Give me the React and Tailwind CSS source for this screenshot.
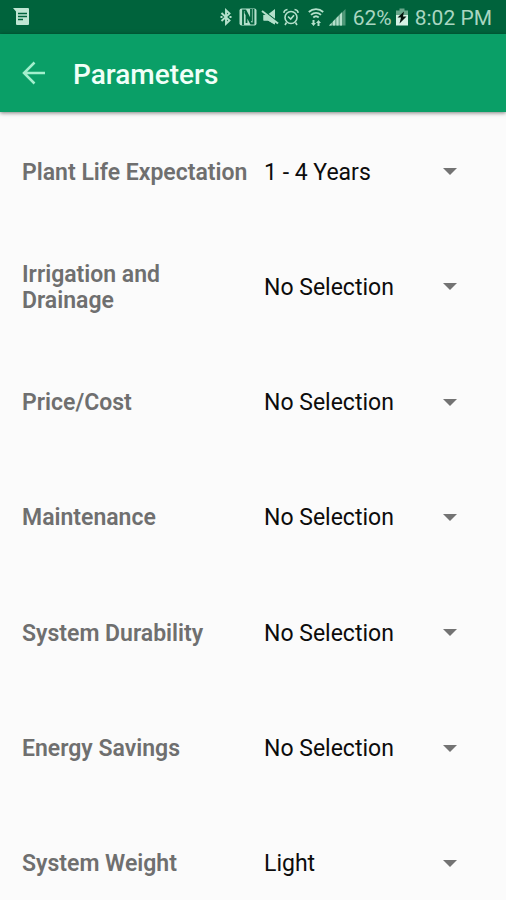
import { useState } from "react";

const NONE = "No Selection";

const PARAMETERS = [
  { id: "life", label: "Plant Life Expectation", value: "1 - 4 Years", options: [NONE, "1 - 4 Years"] },
  { id: "irrigation", label: "Irrigation and Drainage", value: NONE, options: [NONE] },
  { id: "price", label: "Price/Cost", value: NONE, options: [NONE] },
  { id: "maintenance", label: "Maintenance", value: NONE, options: [NONE] },
  { id: "durability", label: "System Durability", value: NONE, options: [NONE] },
  { id: "energy", label: "Energy Savings", value: NONE, options: [NONE] },
  { id: "weight", label: "System Weight", value: "Light", options: [NONE, "Light"] },
];

function NoteIcon() {
  return (
    <svg className="h-[18px] w-[18px]" viewBox="0 0 18 18" aria-hidden="true">
      <path fill="#bfe6d3" d="M0 0h15a1 1 0 0 1 1 1v15a1 1 0 0 1-1 1H4a1 1 0 0 1-1-1V3.500z" />
      <path stroke="#00633c" strokeWidth="1.300" d="M5 5.500h9M5 8.500h9M5 11.500h5" />
    </svg>
  );
}

function BluetoothIcon() {
  return (
    <svg className="h-[18px] w-3" viewBox="0 0 12 18" fill="none" stroke="#b4e0cb" strokeWidth="1.900" aria-hidden="true">
      <path d="M1.500 5l8 7.500L6 15.800V2.200l3.500 3.300L1.500 13" />
      <path d="M0.500 9h2M9.500 9h2" />
    </svg>
  );
}

function NfcIcon() {
  return (
    <svg className="h-[18px] w-[18px]" viewBox="0 0 18 18" aria-hidden="true">
      <rect x="0.500" y="0.500" width="17" height="17" rx="2" fill="#b4e0cb" />
      <path fill="none" stroke="#00633c" strokeWidth="1.800" d="M4 17V2.500h2.500L12 13V1" />
      <path fill="none" stroke="#00633c" strokeWidth="1.800" d="M7.500 7v8M14.500 1v14.500H12L6 4" />
    </svg>
  );
}

function MuteIcon() {
  return (
    <svg className="h-[18px] w-[18px]" viewBox="0 0 18 18" aria-hidden="true">
      <path fill="#b4e0cb" d="M14 1v10L7.500 6zM2.500 6.500L13.500 16v.5L7 12.500H2.500z" />
      <path stroke="#00633c" strokeWidth="3.600" d="M0 2.500l17.500 13.500" />
      <path stroke="#b4e0cb" strokeWidth="2" d="M1 3l16 12.500" />
      <path fill="#b4e0cb" d="M2.500 7h3L14 13.500v3L7 12.500H2.500z" />
    </svg>
  );
}

function AlarmIcon() {
  return (
    <svg className="h-[18px] w-4" viewBox="0 0 16 18" fill="none" stroke="#b4e0cb" strokeWidth="1.600" aria-hidden="true">
      <circle cx="8" cy="9.500" r="6" />
      <path d="M5 8.500l2.700 2.500L11 7.200" />
      <path d="M0.800 4.800C1 2.800 2.200 1.700 4.500 1.500M15.200 4.800C15 2.800 13.800 1.700 11.500 1.500M3.500 14.500L2 17M12.500 14.500L14 17" />
    </svg>
  );
}

function WifiIcon() {
  return (
    <svg className="h-[18px] w-4" viewBox="0 0 16 18" fill="none" stroke="#b4e0cb" strokeWidth="1.800" aria-hidden="true">
      <path d="M0.800 4a10.500 10.500 0 0 1 14.400 0M3 6.800a7.300 7.300 0 0 1 10 0M5.300 9.500a4 4 0 0 1 5.400 0" />
      <path fill="#b4e0cb" stroke="none" d="M4.500 12h2v3H8l-2.500 3L3 15h1.500zM9.500 18v-3H8l2.500-3 2.500 3h-1.500v3z" />
    </svg>
  );
}

function SignalIcon() {
  return (
    <svg className="h-[18px] w-[17px]" viewBox="0 0 17 18" aria-hidden="true">
      <path fill="#6fae92" d="M0 17.500L13 4v13.500z" />
      <path fill="#b4e0cb" d="M0 17.500L2.500 15v2.500zM4 17.500v-4L6 11.500v6zM7.500 17.500V10L9.500 8v9.500zM11 17.500v-11L13 4.500v13z" />
      <path fill="#4f9878" d="M13 17.500v-13L16.500 1v16.500z" />
    </svg>
  );
}

function BatteryIcon() {
  return (
    <svg className="h-[18px] w-3" viewBox="0 0 12 18" aria-hidden="true">
      <path fill="#6aa88c" d="M3.500 0.500h5V2.500H12V7H0V2.500h3.500z" />
      <path fill="#d6f2e4" d="M0 7h12v10.500H0z" />
      <path fill="#04130c" d="M8 3.500L1.500 9.500h3.500L3.500 15.500l7-7H7z" />
    </svg>
  );
}

function StatusBar() {
  return (
    <div className="flex h-[34px] shrink-0 items-center justify-between bg-[#00633c] pl-[13px] pr-[14px] text-[#a9d6c0]">
      <NoteIcon />
      <div className="flex items-center">
        <div className="flex items-center gap-[7px]">
          <BluetoothIcon />
          <NfcIcon />
        </div>
        <div className="ml-1 flex items-center gap-1">
          <MuteIcon />
          <AlarmIcon />
        </div>
        <div className="ml-[9px] mr-[7px] flex items-center gap-[5px]">
          <WifiIcon />
          <SignalIcon />
        </div>
        <span className="pt-[2px] text-[21px] leading-6">62%</span>
        <div className="ml-1 mr-[7px]">
          <BatteryIcon />
        </div>
        <span className="pt-[2px] text-[21px] leading-6">8:02 PM</span>
      </div>
    </div>
  );
}

function AppBar() {
  return (
    <header className="z-10 flex h-[78px] shrink-0 items-center bg-[#0a9f67] px-[22px] shadow-[0_1px_4px_rgba(0,0,0,0.5)]">
      <button type="button" aria-label="Back" className="mr-[27px] h-6 w-6">
        <svg className="h-6 w-6" viewBox="0 0 24 24" fill="none" stroke="#a3efcd" strokeWidth="2.500" aria-hidden="true">
          <path d="M23 12H2.500M12.500 1.500L2 12l10.500 10.500" />
        </svg>
      </button>
      <h1 className="pt-1 text-[28px] font-medium leading-8 text-[#f0fff8]">Parameters</h1>
    </header>
  );
}

function ParameterRow({ id, label, value, options }) {
  const [selected, setSelected] = useState(value);
  return (
    <div className="grid grid-cols-[242px_1fr] items-center">
      <label htmlFor={id} className="pr-3 text-[23px] font-semibold leading-[26px] text-[#6f6f6f]">
        {label}
      </label>
      <div className="grid items-center">
        <select
          id={id}
          value={selected}
          onChange={(event) => setSelected(event.target.value)}
          className="col-start-1 row-start-1 w-full appearance-none bg-transparent text-[23px] leading-8 text-[#0c0c0c]"
        >
          {options.map((option) => (
            <option key={option}>{option}</option>
          ))}
        </select>
        <svg className="pointer-events-none col-start-1 row-start-1 h-[9px] w-[14px] justify-self-end" viewBox="0 0 14 9" aria-hidden="true">
          <path fill="#737373" d="M0 0h14L7 7z" />
        </svg>
      </div>
    </div>
  );
}

export default function App() {
  return (
    <div className="flex h-screen flex-col overflow-hidden bg-[#fbfbfb] font-['Roboto',sans-serif]">
      <StatusBar />
      <AppBar />
      <main className="min-h-0 flex-1 overflow-y-auto [scrollbar-width:none]">
        <form className="mt-[3px] grid h-[807px] grid-rows-7 pl-[22px] pr-[49px]">
          {PARAMETERS.map((parameter) => (
            <ParameterRow key={parameter.id} {...parameter} />
          ))}
        </form>
      </main>
    </div>
  );
}
